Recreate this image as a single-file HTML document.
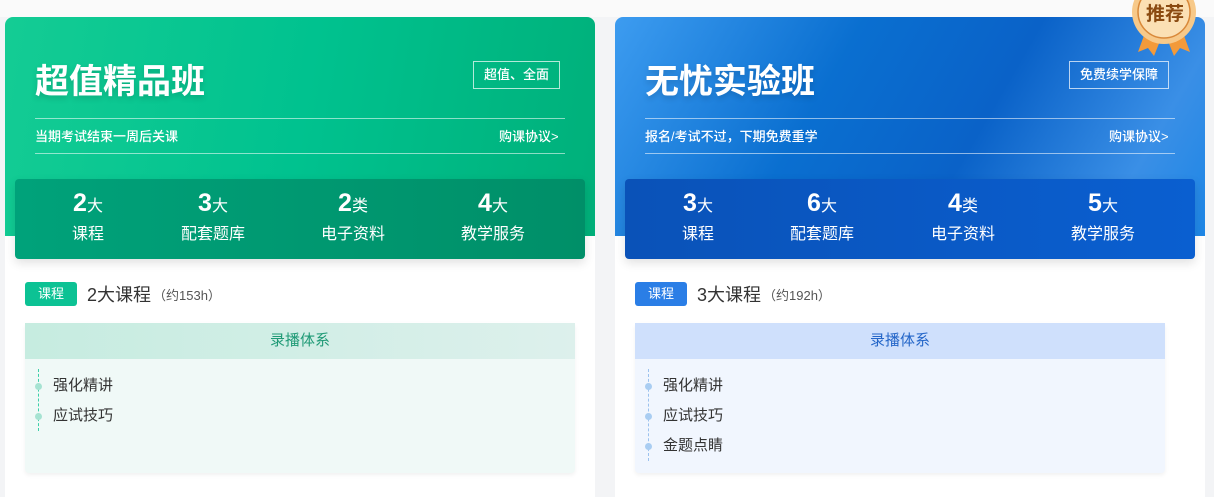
<!DOCTYPE html>
<html><head><meta charset="utf-8"><style>
*{margin:0;padding:0;box-sizing:border-box}
body{width:1214px;height:490px;background:#f3f4f6;font-family:"Liberation Sans","Noto Sans CJK SC",sans-serif;position:relative;overflow:hidden}
.top{position:absolute;left:0;top:0;width:1214px;height:17px;background:#fafafa}
.card{position:absolute;top:17px;width:590px;height:480px;background:#fff;border-radius:8px 8px 0 0;overflow:hidden}
.hd{position:absolute;left:0;top:0;width:100%;height:219px}
.title{position:absolute;left:30px;top:37px;font-size:34px;font-weight:bold;color:#fff;text-shadow:0 3px 6px rgba(0,0,0,.15)}
.tag{position:absolute;top:44px;height:28px;border:1px solid rgba(255,255,255,.7);color:#fff;font-size:13px;line-height:26px;padding:0 10px;font-weight:500}
.l1,.l2{position:absolute;left:30px;height:1px;background:rgba(255,255,255,.55)}
.l1{top:101px}.l2{top:136px}
.sub{position:absolute;left:30px;top:109px;font-size:13px;color:#fff;font-weight:500}
.agr{position:absolute;top:109px;font-size:13px;color:#fff;font-weight:500}
.stats{position:absolute;left:10px;top:162px;width:570px;height:80px;border-radius:4px;box-shadow:0 4px 10px rgba(0,0,0,.12)}
.st{position:absolute;top:0;width:120px;margin-left:-60px;text-align:center;color:#fff;padding-top:10px}
.st b{font-size:25px;font-family:"Liberation Sans",sans-serif}
.st span{font-size:16px}
.st div{font-size:16px;margin-top:2px}
.lab{position:absolute;left:20px;top:264px;display:flex;align-items:center}
.pill{width:52px;height:24px;border-radius:3px;color:#fff;font-size:13px;text-align:center;line-height:24px;margin-right:10px}
.lab .t{font-size:18px;color:#333}
.lab .h{font-size:13px;color:#555;margin-left:2px}
.box{position:absolute;left:20px;top:306px;height:150px;border-radius:4px;box-shadow:0 2px 5px rgba(0,0,0,.06)}
.bh{height:36px;line-height:36px;text-align:center;font-size:15px}
.it{position:relative;padding-left:28px;font-size:15px;color:#333;height:30px;line-height:30px}
.it:before{content:"";position:absolute;left:10px;top:12px;width:7px;height:7px;border-radius:50%}
.dl{position:absolute;left:13px;top:46px;border-left:1px dashed}
.g .it:before{background:#a6e3d2}
.b .it:before{background:#a9cdf2}
</style></head><body>
<div class="top"></div>
<div class="card g" style="left:5px">
 <div class="hd" style="background:linear-gradient(100deg,#14cc94 0%,#00c28f 50%,#00b07a 100%)"></div>
 <div class="title">超值精品班</div>
 <div class="tag" style="left:468px">超值、全面</div>
 <div class="l1" style="width:530px"></div>
 <div class="sub">当期考试结束一周后关课</div>
 <div class="agr" style="left:494px">购课协议&gt;</div>
 <div class="l2" style="width:530px"></div>
 <div class="stats" style="background:linear-gradient(90deg,#00a27a,#008f68)">
  <div class="st" style="left:73px"><b>2</b><span>大</span><div>课程</div></div>
  <div class="st" style="left:198px"><b>3</b><span>大</span><div>配套题库</div></div>
  <div class="st" style="left:338px"><b>2</b><span>类</span><div>电子资料</div></div>
  <div class="st" style="left:478px"><b>4</b><span>大</span><div>教学服务</div></div>
 </div>
 <div class="lab"><div class="pill" style="background:#0cc294">课程</div><span class="t">2大课程</span><span class="h">（约153h）</span></div>
 <div class="box" style="width:550px;background:#f0f9f7">
  <div class="bh" style="background:linear-gradient(90deg,#c6ece0,#ddf0ec);color:#1f9a76">录播体系</div>
  <div class="dl" style="height:62px;border-color:#3dcfa8"></div>
  <div style="padding-top:12px">
  <div class="it">强化精讲</div>
  <div class="it">应试技巧</div></div>
 </div>
</div>
<div class="card b" style="left:615px">
 <div class="hd" style="background:linear-gradient(120deg,#3d9cf0 0%,#0a6fd0 35%,#0a62c8 60%,#3a8fe6 85%,#1d86e6 100%)"></div>
 <div class="title">无忧实验班</div>
 <div class="tag" style="left:454px">免费续学保障</div>
 <div class="l1" style="width:530px"></div>
 <div class="sub">报名/考试不过，下期免费重学</div>
 <div class="agr" style="left:494px">购课协议&gt;</div>
 <div class="l2" style="width:530px"></div>
 <div class="stats" style="background:linear-gradient(90deg,#0a52b8,#0a5fd0)">
  <div class="st" style="left:73px"><b>3</b><span>大</span><div>课程</div></div>
  <div class="st" style="left:197px"><b>6</b><span>大</span><div>配套题库</div></div>
  <div class="st" style="left:338px"><b>4</b><span>类</span><div>电子资料</div></div>
  <div class="st" style="left:478px"><b>5</b><span>大</span><div>教学服务</div></div>
 </div>
 <div class="lab"><div class="pill" style="background:#2a7ee6">课程</div><span class="t">3大课程</span><span class="h">（约192h）</span></div>
 <div class="box" style="width:530px;background:#f1f6fe">
  <div class="bh" style="background:#cfe0fc;color:#2466c8">录播体系</div>
  <div class="dl" style="height:92px;border-color:#9cc2ee"></div>
  <div style="padding-top:12px">
  <div class="it">强化精讲</div>
  <div class="it">应试技巧</div>
  <div class="it">金题点睛</div></div>
 </div>
</div>
<svg style="position:absolute;left:1122px;top:0" width="86" height="60" viewBox="0 0 86 60">
 <path d="M24 30 L16 52 L26 48 L32 56 L40 36Z" fill="#f39a3a"/>
 <path d="M60 30 L68 52 L58 48 L52 56 L44 36Z" fill="#f39a3a"/>
 <circle cx="42" cy="12" r="32" fill="#f7c989"/>
 <circle cx="42" cy="12" r="26" fill="#fbe0b4" stroke="#d9893a" stroke-width="1.5"/>
 <text x="43" y="20" text-anchor="middle" font-size="19" font-weight="bold" fill="#8a4a10" font-family="Noto Sans CJK SC,sans-serif">推荐</text>
</svg>
</body></html>
